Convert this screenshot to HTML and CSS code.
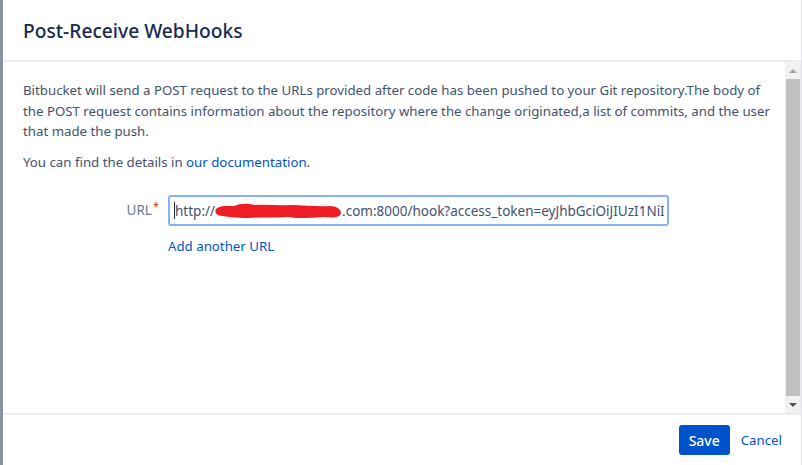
FILE: index.html
```html
<!DOCTYPE html>
<html>
<head>
<meta charset="utf-8">
<link rel="stylesheet" href="styles.css">
</head>
<body>
<div class="blanket"></div>
<div class="dialog">
  <header class="dialog-header">
    <h2 class="title">Post-Receive WebHooks</h2>
  </header>
  <div class="dialog-body">
    <div class="content">
      <p class="desc">Bitbucket will send a POST request to the URLs provided after code has been pushed to your Git repository.The body of the POST request contains information about the repository where the change originated,a list of commits, and the user that made the push.</p>
      <p class="desc">You can find the details in <a class="link" href="#">our documentation</a>.</p>
      <div class="field">
        <label class="label">URL<span class="req">*</span></label>
        <div class="field-main">
          <div class="input"><span class="caret"></span>http://<span class="redact"><svg width="128" height="16" viewBox="0 0 128 16"><path d="M1 6 C5 2 12 3 20 3 C24 0 34 0 40 2 C52 1 64 3 76 2 C90 2 104 4 116 3 C122 3 127 6 127 10 C126 15 118 15 110 14 C98 15 86 16 74 14 C60 15 46 14 34 15 C22 15 10 14 3 12 C0 10 0 8 1 6 Z" fill="#ee1c25"/></svg></span>.com:8000/hook?access_token=eyJhbGciOiJIUzI1NiI</div>
          <a class="link add" href="#">Add another URL</a>
        </div>
      </div>
    </div>
    <div class="scrollbar">
      <div class="arrow up"></div>
      <div class="thumb"></div>
      <div class="arrow down"></div>
    </div>
  </div>
  <footer class="dialog-footer">
    <button class="btn-save">Save</button>
    <a class="link cancel" href="#">Cancel</a>
  </footer>
</div>
</body>
</html>
```
FILE: styles.css
```css
* { box-sizing: border-box; }
html, body { margin: 0; padding: 0; }
body {
  width: 802px;
  height: 465px;
  display: flex;
  font-family: "Noto Sans", "Open Sans", sans-serif;
  font-size: 13.25px;
  color: #172b4d;
  background: #fff;
  overflow: hidden;
}
.blanket {
  width: 3px;
  flex: none;
  background: #8993a4;
}
.dialog {
  flex: 1;
  display: flex;
  flex-direction: column;
  height: 465px;
  border-right: 1px solid #dfe1e6;
}
.dialog-header {
  height: 62px;
  flex: none;
  border-bottom: 2px solid #ebecf0;
  display: flex;
  align-items: center;
  padding: 0 20px;
}
.title {
  margin: 0;
  font-size: 19.2px;
  font-weight: 500;
  color: #172b4d;
}
.dialog-body {
  flex: 1;
  display: flex;
  min-height: 0;
}
.content {
  flex: 1;
  padding: 18px 12px 0 20px;
}
.desc {
  margin: 0 0 10px 0;
  line-height: 20.5px;
  color: #42526e;
}
.link {
  color: #0052cc;
  text-decoration: none;
}
.field {
  display: flex;
  margin-top: 23px;
}
.label {
  width: 145px;
  text-align: right;
  padding-right: 9px;
  padding-top: 6px;
  color: #6b778c;
  font-size: 13.5px;
}
.req {
  color: #de350b;
  font-size: 11px;
  vertical-align: top;
  position: relative;
  top: -3px;
  margin-left: 1px;
}
.field-main {
  display: flex;
  flex-direction: column;
}
.input {
  width: 501px;
  height: 31px;
  border: 2px solid #85b3f5;
  border-radius: 3px;
  padding: 0 4px;
  display: flex;
  align-items: center;
  white-space: nowrap;
  overflow: hidden;
  color: #42526e;
  font-size: 13.5px;
}
.caret {
  width: 1px;
  height: 17px;
  background: #172b4d;
  flex: none;
}
.redact {
  display: inline-flex;
  width: 127px;
  height: 16px;
  align-items: center;
  flex: none;
}
.add {
  margin-top: 11px;
}
.scrollbar {
  width: 16px;
  flex: none;
  background: #f1f1f1;
  display: flex;
  flex-direction: column;
}
.arrow {
  height: 17px;
  flex: none;
  display: flex;
  align-items: center;
  justify-content: center;
}
.arrow::before {
  content: "";
  width: 0;
  height: 0;
  border-left: 4px solid transparent;
  border-right: 4px solid transparent;
}
.arrow.up::before { border-bottom: 4px solid #a3a3a3; }
.arrow.down::before { border-top: 4px solid #505050; }
.thumb {
  flex: 1;
  background: #c1c1c1;
  margin: 0 1px;
}
.dialog-footer {
  height: 52px;
  flex: none;
  border-top: 2px solid #ebecf0;
  display: flex;
  align-items: center;
  justify-content: flex-end;
  padding: 0 19px 0 0;
  gap: 11px;
}
.btn-save {
  background: #0052cc;
  color: #fff;
  border: none;
  border-radius: 3px;
  height: 30px;
  padding: 0 10px;
  font-family: inherit;
  font-size: 14px;
  font-weight: 500;
}
.cancel { font-size: 13.25px; }
```
